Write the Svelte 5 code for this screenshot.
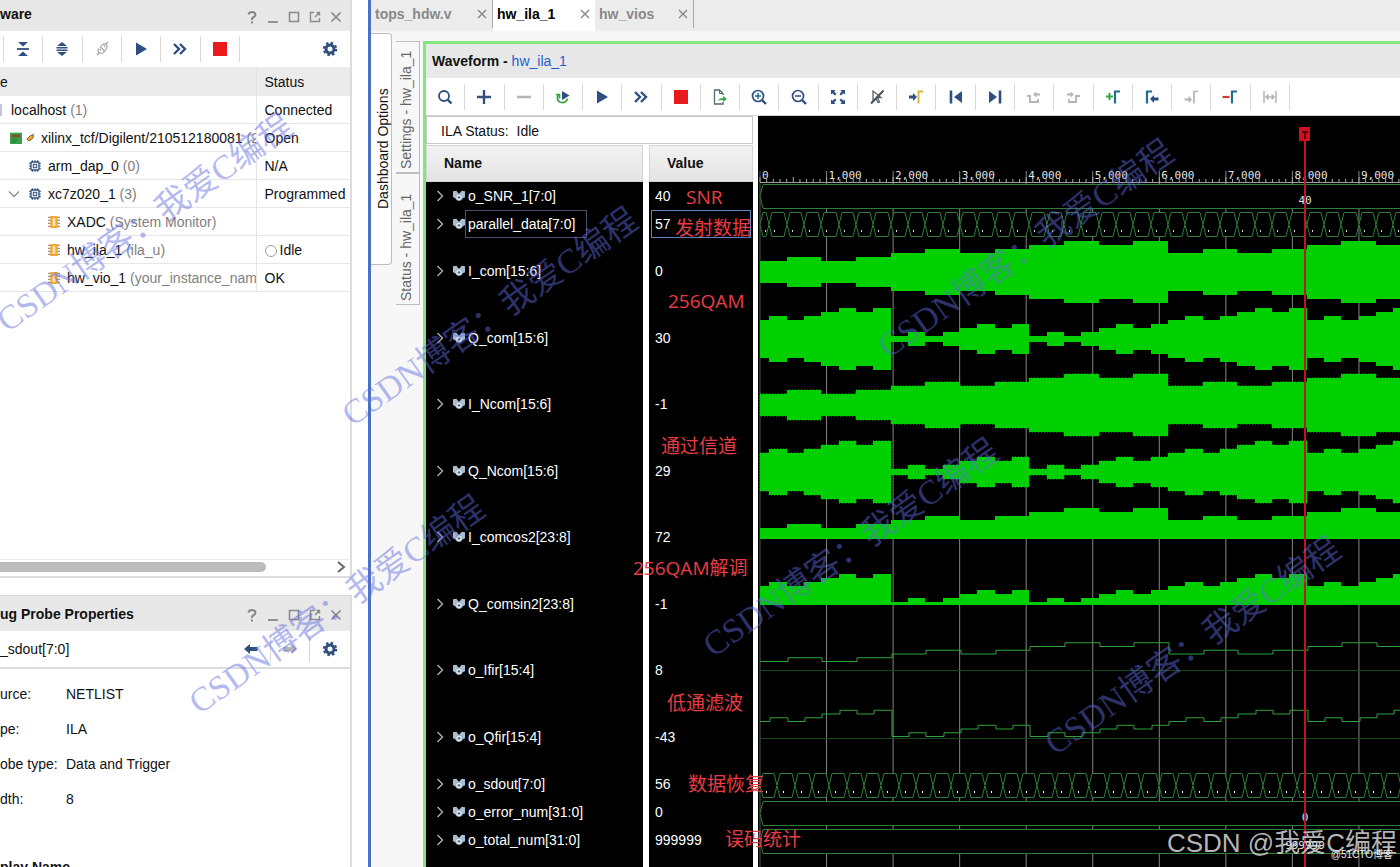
<script lang="ts">
    const NAVY = '#2f4f80';
    const GREY = '#b4b4b4';
    const TEAL = '#1f6f8b';

    // all glyphs are drawn on an 18x18 grid
    const icons: Record<string, string> = {
        help: `<path d="M5.500 6.500Q6 4 9 4T12.500 6.500Q12.500 8 10.500 9.200T9 12M9 13.500V15.500" fill="none" stroke="#858585" stroke-width="2"/>`,
        minimize: `<path d="M4 14H14" stroke="#8a8a8a" stroke-width="1.8"/>`,
        maximize: `<rect x="4.500" y="4.500" width="9" height="9" fill="none" stroke="#8a8a8a" stroke-width="1.6"/>`,
        float: `<path d="M8 4.500H4.500V13.500H13.500V10M10.500 4.500H13.500V7.500M13.500 4.500L9 9" fill="none" stroke="#8a8a8a" stroke-width="1.4"/>`,
        close: `<path d="M4.500 4.500L13.500 13.500M13.500 4.500L4.500 13.500" stroke="#858585" stroke-width="1.6"/>`,
        collapse: `<path d="M4 2H14L9 6.500ZM4 16H14L9 11.500Z" fill="${NAVY}"/><path d="M3 9H15" stroke="${NAVY}" stroke-width="1.8"/>`,
        expand: `<path d="M4 6L9 2L14 6ZM4 12L9 16L14 12Z" fill="${NAVY}"/><path d="M3.500 7.700H14.500M3.500 10.300H14.500" stroke="${NAVY}" stroke-width="1.4"/>`,
        connect: `<path d="M4 15L6 12.500M7 6.500L12 11.500M5.500 8.500Q4.500 11 6 12.500T10 13L11.500 11M8 6L10.500 4Q13 3.500 13.800 5T13 9.500L12 11M12.500 4L15 2M8 10.500L6.500 9M11 7L12.500 5.500" fill="none" stroke="#ababab" stroke-width="1.3"/>`,
        play: `<path d="M4 2.500L15 9L4 15.500Z" fill="${NAVY}"/>`,
        forward: `<path d="M3 4L8 9L3 14M9 4L14 9L9 14" fill="none" stroke="${NAVY}" stroke-width="2.4"/>`,
        stop: `<rect x="2" y="2" width="14" height="14" fill="#e81a1c"/>`,
        gear: `<circle cx="9" cy="9" r="4" fill="none" stroke="${NAVY}" stroke-width="3"/><circle cx="9" cy="9" r="6" fill="none" stroke="${NAVY}" stroke-width="2.4" stroke-dasharray="2.400 2.310"/>`,
        search: `<circle cx="8" cy="8" r="5" fill="none" stroke="${NAVY}" stroke-width="1.8"/><path d="M11.500 11.500L15.500 15.500" stroke="${NAVY}" stroke-width="2.4"/>`,
        add: `<path d="M9 2V16M2 9H16" stroke="${NAVY}" stroke-width="2.400"/>`,
        remove: `<path d="M2 9H16" stroke="${GREY}" stroke-width="2.6"/>`,
        rerun: `<path d="M8 3L15.500 7.500L8 12Z" fill="${NAVY}"/><path d="M4 7Q2 12 6 14Q12 16 13.500 10.500M2 6.500H5.500V10.500" fill="none" stroke="#3ba547" stroke-width="1.7"/>`,
        exportFile: `<path d="M12 7V5.500L8.500 2H3.500V16H12V14" fill="none" stroke="#556a72" stroke-width="1.3"/><path d="M8.500 2V5.500H12" fill="none" stroke="#556a72"/><path d="M7 13Q8 10 12 10V8L16 11L12 14V12Q9 11.500 7 13Z" fill="#38a646"/>`,
        zoomIn: `<circle cx="8" cy="8" r="5.500" fill="none" stroke="${NAVY}" stroke-width="1.700"/><path d="M12 12L16 16" stroke="${NAVY}" stroke-width="2.400"/><path d="M5 8H11M8 5V11" stroke="${TEAL}" stroke-width="1.500"/>`,
        zoomOut: `<circle cx="8" cy="8" r="5.500" fill="none" stroke="${NAVY}" stroke-width="1.700"/><path d="M12 12L16 16" stroke="${NAVY}" stroke-width="2.400"/><path d="M5 8H11" stroke="${NAVY}" stroke-width="1.500"/>`,
        fit: `<path d="M2 2H6.500L5.200 3.500L7.500 6L6 7.500L3.500 5.200L2 6.500ZM16 2V6.500L14.500 5.200L12 7.500L10.500 6L12.800 3.500L11.500 2ZM2 16V11.500L3.500 12.800L6 10.500L7.500 12L5.200 14.500L6.500 16ZM16 16H11.500L12.800 14.500L10.500 12L12 10.500L14.500 12.800L16 11.500Z" fill="${NAVY}"/>`,
        noCursor: `<path d="M5 3V13L8 10.500L10 14.500L11.500 14L9.500 9.500H13Z" fill="none" stroke="#59636c" stroke-width="1.3"/><path d="M15.500 2.500L3 15.500" stroke="#4b545c" stroke-width="2"/>`,
        gotoTrigger: `<path d="M2 7.500H6V5L10 9L6 13V10.500H2Z" fill="${NAVY}"/><path d="M11.500 15.500V3.500H16" fill="none" stroke="#d9b83c" stroke-width="2"/>`,
        first: `<path d="M4 2.500V15.500" stroke="${NAVY}" stroke-width="2.600"/><path d="M15 3V15L7 9Z" fill="${NAVY}"/>`,
        last: `<path d="M14 2.500V15.500" stroke="${NAVY}" stroke-width="2.600"/><path d="M3 3V15L11 9Z" fill="${NAVY}"/>`,
        prevEdge: `<path d="M2 8H5V14H13V11" fill="none" stroke="${GREY}" stroke-width="1.800"/><path d="M8 6.500L11.500 3.500V5.500H15V7.500H11.500V9.500Z" fill="${GREY}"/>`,
        nextEdge: `<path d="M5 11V14H12V8H16" fill="none" stroke="${GREY}" stroke-width="1.800"/><path d="M10 6.500L6.500 3.500V5.500H3V7.500H6.500V9.500Z" fill="${GREY}"/>`,
        addMarker: `<path d="M2 8.500H9M5.500 5V12" stroke="#3ba547" stroke-width="2"/><path d="M11 15.500V3.500H16" fill="none" stroke="${TEAL}" stroke-width="2.200"/>`,
        prevMarker: `<path d="M4 15.500V3.500H9" fill="none" stroke="${TEAL}" stroke-width="2.200"/><path d="M7 11L11 7V9.500H15.500V12.500H11V15Z" fill="${NAVY}"/>`,
        nextMarker: `<path d="M12 15.500V3.500H16" fill="none" stroke="${GREY}" stroke-width="1.700"/><path d="M10 11.500L6.500 8V10.500H2.500V12.500H6.500V15Z" fill="${GREY}"/>`,
        delMarker: `<path d="M1.500 9H8.500" stroke="#d63b35" stroke-width="2.200"/><path d="M11 15.500V3.500H16" fill="none" stroke="${TEAL}" stroke-width="2.200"/>`,
        span: `<path d="M3 3V15M15 3V15M5 9H13M7.500 6.500L5 9L7.500 11.500M10.500 6.500L13 9L10.500 11.500" fill="none" stroke="${GREY}" stroke-width="1.500"/>`,
        back: `<path d="M2 9L8 4V7H15.500V11H8V14Z" fill="${NAVY}"/>`,
        next: `<path d="M16 9L10 4V7H2.500V11H10V14Z" fill="${GREY}"/>`,
        chip: `<path d="M5 0V18M9 0V18M13 0V18M0 5H18M0 9H18M0 13H18" stroke="#49678c" stroke-width="1.500"/><rect x="3" y="3" width="12" height="12" rx="1" fill="#fff" stroke="#2f4f80" stroke-width="2"/><rect x="6.500" y="6.500" width="5" height="5" fill="#dfe7f0" stroke="#3d5c86" stroke-width="1.600"/>`,
        core: `<path d="M0 2H18M0 6.500H18M0 11H18M0 15.500H18" stroke="#9a958a" stroke-width="2"/><rect x="3.500" y="0" width="11" height="18" fill="#f3a72e"/><rect x="7" y="3" width="4" height="12" fill="#ffe6b8"/>`,
        board: `<rect x="0" y="1" width="18" height="17" fill="#36a04a"/><rect x="3" y="4" width="12" height="4" fill="#8c4a2c"/><path d="M2 12H12M2 15H9" stroke="#26783a" stroke-width="1.500"/>`,
        plug: `<path d="M2 12L9 5L14 4L15 9L8 15Q4 17 2 12Z" fill="#e9a52b" stroke="#7a6a4a" stroke-width="2"/><path d="M12 6L16 1" stroke="#6b5a3a" stroke-width="2"/>`,
        probe: `<path d="M0 2L5 1L9 6L13 1L18 2V11L13 13H5L0 11Z" fill="#a9bfd0"/><circle cx="9" cy="11" r="5" fill="#dce7ee" stroke="#8ba2b4"/><circle cx="9" cy="11" r="1.800" fill="#4b6173"/>`
    };

    const windowControls = [['help', 'Help'], ['minimize', 'Minimize'], ['maximize', 'Maximize'], ['float', 'Float'], ['close', 'Close']];
    const hwTools = ['collapse', 'expand', 'connect', 'play', 'forward', 'stop'];
    const waveTools = ['search', 'add', 'remove', 'rerun', 'play', 'forward', 'stop', 'exportFile', 'zoomIn', 'zoomOut', 'fit',
        'noCursor', 'gotoTrigger', 'first', 'last', 'prevEdge', 'nextEdge', 'addMarker', 'prevMarker', 'nextMarker', 'delMarker', 'span'];

    const hardware = [
        { name: 'localhost', note: '(1)', status: 'Connected', kind: 'host', depth: 0 },
        { name: 'xilinx_tcf/Digilent/210512180081', note: '(2)', status: 'Open', kind: 'board', depth: 1 },
        { name: 'arm_dap_0', note: '(0)', status: 'N/A', kind: 'chip', depth: 2 },
        { name: 'xc7z020_1', note: '(3)', status: 'Programmed', kind: 'chip', depth: 2, open: true },
        { name: 'XADC', note: '(System Monitor)', status: '', kind: 'core', depth: 3 },
        { name: 'hw_ila_1', note: '(ila_u)', status: 'Idle', kind: 'core', depth: 3, lamp: true },
        { name: 'hw_vio_1', note: '(your_instance_name)', status: 'OK', kind: 'core', depth: 3 }
    ];

    const props = [['urce:', 'NETLIST'], ['pe:', 'ILA'], ['obe type:', 'Data and Trigger'], ['dth:', '8']];

    const tabs = [
        { label: 'tops_hdw.v', w: 122 },
        { label: 'hw_ila_1', w: 102, active: true },
        { label: 'hw_vios', w: 99 }
    ];

    const signals = [
        { name: 'o_SNR_1[7:0]', value: '40' },
        { name: 'parallel_data[7:0]', value: '57', selected: true },
        { name: 'I_com[15:6]', value: '0', analog: true },
        { name: 'Q_com[15:6]', value: '30', analog: true },
        { name: 'I_Ncom[15:6]', value: '-1', analog: true },
        { name: 'Q_Ncom[15:6]', value: '29', analog: true },
        { name: 'I_comcos2[23:8]', value: '72', analog: true },
        { name: 'Q_comsin2[23:8]', value: '-1', analog: true },
        { name: 'o_Ifir[15:4]', value: '8', analog: true },
        { name: 'o_Qfir[15:4]', value: '-43', analog: true },
        { name: 'o_sdout[7:0]', value: '56' },
        { name: 'o_error_num[31:0]', value: '0' },
        { name: 'o_total_num[31:0]', value: '999999' }
    ];
    const groups = [signals.slice(0, 2), signals.slice(2, 10), signals.slice(10)];

    // waveform geometry, in plot coordinates
    const X0 = 2;
    const SYM = 17.33;
    const COUNT = 96;
    const TICK = 66.55;
    const CURSOR = 547;

    const iBase = [2, 4, 6, 4, 6];
    const qBase = [4, 0, 0, 4, 4];
    const iStep = [0, 0, 1, 1, 0, 0, 1, 1];
    const qStep = [0, 1, 0, 1, 2, 3, 2, 3];
    const idx = Array.from({ length: COUNT }, (_, k) => k);
    const iLevels = idx.map(k => iBase[(k >> 3) % 5] + iStep[k % 8]);
    const qLevels = idx.map(k => qBase[(k >> 3) % 5] + qStep[k % 8]);

    const edge = (k: number) => Math.max(X0, Math.round(k * SYM - 6));

    function steps(levels: number[], y: (n: number) => number, shift = 0) {
        return levels.map((n, k) => `${k ? 'L' : 'M'}${edge(k) + (k ? shift : 0)} ${y(n)}L${edge(k + 1) + shift} ${y(n)}`).join('');
    }

    function band(levels: number[], mid: number) {
        const right = edge(COUNT);
        let d = steps(levels, n => mid - 3 - 4 * n);
        for (let k = COUNT - 1; k >= 0; k--) {
            const y = mid + 3 + 4 * levels[k];
            d += `L${k === COUNT - 1 ? right : edge(k + 1)} ${y}L${edge(k)} ${y}`;
        }
        return d + 'Z';
    }

    const area = (levels: number[], base: number) =>
        steps(levels, n => base - 3 - 4 * n) + `L${edge(COUNT)} ${base}L${X0} ${base}Z`;

    function cell(a: number, b: number, top: number) {
        return `M${a} ${top + 12}L${a + 3} ${top}H${b - 3}L${b} ${top + 12}L${b - 3} ${top + 24}H${a + 3}Z`;
    }

    const bands = [
        { d: band(iLevels, 155), noisy: false },
        { d: band(qLevels, 222), noisy: false },
        { d: band(iLevels, 288), noisy: true },
        { d: band(qLevels, 355), noisy: true },
        { d: area(iLevels, 422), noisy: false },
        { d: area(qLevels, 488), noisy: false }
    ];
    const firs = [
        { zero: 553.5, d: steps(iLevels, n => 552 - 3.75 * n, 1) },
        { zero: 621.5, d: steps(qLevels, n => 619.5 - 3.75 * n, 1) }
    ];
    const wideBuses = [{ top: 67.5, text: '40' }, { top: 684.5, text: '0' }, { top: 712.5, text: '999999' }];
    const ticks = Array.from({ length: 24 }, (_, i) => i);
    const minor = Array.from({ length: 240 }, (_, i) => i);

    const notes = [
        { text: 'SNR', x: 686, y: 197 },
        { text: '发射数据', x: 675, y: 228 },
        { text: '256QAM', x: 668, y: 301 },
        { text: '通过信道', x: 661, y: 446 },
        { text: '256QAM解调', x: 633, y: 568 },
        { text: '低通滤波', x: 667, y: 703 },
        { text: '数据恢复', x: 688, y: 784 },
        { text: '误码统计', x: 725, y: 839 }
    ];
    const stamps = [
        { x: 1, y: 324 }, { x: 346, y: 418 }, { x: 882, y: 350 },
        { x: 193, y: 706 }, { x: 707, y: 649 }, { x: 1049, y: 747 }
    ];
</script>

{#snippet icon(name: string, size = 18)}
    <svg class="icon" width={size} height={size} viewBox="0 0 18 18" aria-hidden="true">{@html icons[name]}</svg>
{/snippet}

{#snippet controls()}
    <div class="controls">
        {#each windowControls as [name, label]}
            <button aria-label={label}>{@render icon(name, 18)}</button>
        {/each}
    </div>
{/snippet}

<div class="app">
    <aside class="left">
        <section class="panel hardware">
            <header class="panel-head"><h2>ware</h2>{@render controls()}</header>
            <div class="bar">
                <div class="tools hw-tools">
                    {#each hwTools as t}<button aria-label={t}>{@render icon(t)}</button>{/each}
                </div>
                <button class="gear" aria-label="Settings">{@render icon('gear')}</button>
            </div>
            <table>
                <thead><tr><th class="col-name">e</th><th>Status</th></tr></thead>
                <tbody>
                    {#each hardware as row}
                        <tr>
                            <td class="col-name">
                                <div class="node depth{row.depth}">
                                    {#if row.open}
                                        <button class="twisty" aria-label="Collapse"><svg width="12" height="12" viewBox="0 0 12 12"><path d="M1 3.500L6 8.500L11 3.500" fill="none" stroke="#8d8d8d" stroke-width="1.300" /></svg></button>
                                    {/if}
                                    {#if row.kind === 'host'}
                                        <i class="host"></i>
                                    {:else}
                                        {@render icon(row.kind, 12)}
                                    {/if}
                                    {#if row.kind === 'board'}{@render icon('plug', 9)}{/if}
                                    <span>{row.name} <em>{row.note}</em></span>
                                </div>
                            </td>
                            <td class:lamp={row.lamp}>{row.status}</td>
                        </tr>
                    {/each}
                </tbody>
            </table>
            <div class="hscroll">
                <div class="thumb"></div>
                <button aria-label="Scroll right"><svg width="10" height="12" viewBox="0 0 10 12"><path d="M2 1L8 6L2 11" fill="none" stroke="#666" stroke-width="2" /></svg></button>
            </div>
        </section>

        <section class="panel properties">
            <header class="panel-head"><h2>ug Probe Properties</h2>{@render controls()}</header>
            <div class="bar sub">
                <span class="probe-name">_sdout[7:0]</span>
                <button class="nav" aria-label="Back">{@render icon('back')}</button>
                <button class="nav" aria-label="Forward">{@render icon('next')}</button>
                <button class="gear" aria-label="Settings">{@render icon('gear')}</button>
            </div>
            <dl>
                {#each props as [k, v]}<dt>{k}</dt><dd>{v}</dd>{/each}
            </dl>
            <h3>play Name</h3>
        </section>
    </aside>

    <main>
        <nav class="tabs">
            {#each tabs as tab}
                <div class="tab" class:active={tab.active} style="width:{tab.w}px">
                    <button class="label">{tab.label}</button>
                    <button class="x" aria-label="Close {tab.label}"><svg width="10" height="10" viewBox="0 0 10 10"><path d="M1 1L9 9M9 1L1 9" stroke="#858585" stroke-width="1.300" /></svg></button>
                </div>
            {/each}
        </nav>

        <div class="work">
            <div class="rail"><button class="vtab dash">Dashboard Options</button></div>
            <div class="rail inner">
                <button class="vtab side">Settings - hw_ila_1</button>
                <button class="vtab side">Status - hw_ila_1</button>
            </div>

            <section class="wave">
                <header><b>Waveform -</b> <a href="#hw_ila_1">hw_ila_1</a></header>
                <div class="bar wave-bar">
                    <div class="tools wave-tools">
                        {#each waveTools as t}<button aria-label={t}>{@render icon(t)}</button>{/each}
                    </div>
                </div>
                <div class="body">
                    <div class="table">
                        <div class="ila">ILA Status:&nbsp; Idle</div>
                        <div class="columns">
                            <div class="names">
                                <div class="th">Name</div>
                                {#each groups as group}
                                    <div class="group" class:analog={group[0].analog}>
                                        {#each group as s}
                                            <div class="sig">
                                                <button class="twisty" aria-label="Expand {s.name}"><svg width="8" height="12" viewBox="0 0 8 12"><path d="M1.500 1L6.500 6L1.500 11" fill="none" stroke="#b0b0b0" stroke-width="1.400" /></svg></button>
                                                {@render icon('probe', 12)}
                                                <span class:selected={s.selected}>{s.name}</span>
                                            </div>
                                        {/each}
                                    </div>
                                {/each}
                            </div>
                            <div class="values">
                                <div class="th">Value</div>
                                {#each groups as group}
                                    <div class="group" class:analog={group[0].analog}>
                                        {#each group as s}<div class="val" class:selected={s.selected}>{s.value}</div>{/each}
                                    </div>
                                {/each}
                            </div>
                        </div>
                    </div>

                    <div class="plot">
                        <svg width="100%" height="100%">
                            {#each ticks as i}
                                <line x1={X0 + i * TICK} x2={X0 + i * TICK} y1="54" y2="100%" stroke={i ? '#858585' : '#4c5a4c'} />
                                <text class="mono" x={X0 + 2 + i * TICK} y="62">{i ? `${i},000` : '0'}</text>
                            {/each}
                            {#each minor as i}
                                <line x1={X0 + i * TICK / 10} x2={X0 + i * TICK / 10} y1={i % 5 ? 62 : 60} y2="65" stroke="#aaa" />
                            {/each}
                            <line x1={X0} x2="100%" y1="65.500" y2="65.500" stroke="#a0a0a0" />

                            {#each wideBuses as bus}
                                <path d={`M4000 ${bus.top}H5L2 ${bus.top + 12}L5 ${bus.top + 24}H4000Z`} class="bus" />
                            {/each}
                            {#each idx as k}
                                <path class="bus" d={cell(edge(k), edge(k + 1), 95.5)} />
                                <rect x={edge(k) + 5} y="113" width="1" height="2" fill="#ddd" />
                                <path class="bus" d={cell(2 + Math.round(k * SYM), 2 + Math.round((k + 1) * SYM), 656.5)} />
                                <rect x={Math.round(k * SYM) + 8} y="674" width="1" height="2" fill="#fff" />
                            {/each}

                            {#each bands as b}<path d={b.d} class="fill" class:noisy={b.noisy} />{/each}
                            {#each firs as f}
                                <line x1={X0} x2="100%" y1={f.zero} y2={f.zero} stroke="#174a1a" />
                                <path d={f.d} class="trace" />
                            {/each}
                            {#each wideBuses as bus}
                                <text class="mono value" x={CURSOR} y={bus.top + 19}>{bus.text}</text>
                            {/each}

                            <line x1={CURSOR} x2={CURSOR} y1="20" y2="100%" stroke="#c01420" stroke-width="2" />
                            <rect x={CURSOR - 6} y="10" width="11" height="14" fill="#d01020" />
                            <path d={`M${CURSOR - 3} 15H${CURSOR + 3}M${CURSOR} 15V22`} stroke="#300" stroke-width="1.500" />
                        </svg>
                    </div>
                </div>
            </section>
        </div>
    </main>

    <div class="overlay">
        {#each stamps as s}<span class="stamp" style="left:{s.x}px;top:{s.y}px">CSDN博客：我爱C编程</span>{/each}
        {#each notes as n}<span class="note" style="left:{n.x}px;top:{n.y}px">{n.text}</span>{/each}
        <span class="credit">CSDN @我爱C编程</span>
        <span class="host-credit">@51CTO博客</span>
    </div>
</div>

<style>
    :global(body) {
        margin: 0;
        background: #fff;
    }

    .app {
        position: relative;
        display: flex;
        height: 100vh;
        overflow: hidden;
        font: 14px/20px "Liberation Sans", Arial, sans-serif;
        color: #111;
    }

    button {
        display: flex;
        align-items: center;
        justify-content: center;
        margin: 0;
        padding: 0;
        border: none;
        background: none;
        font: inherit;
        color: inherit;
    }

    .icon {
        flex: none;
        display: block;
    }

    h2, h3 {
        margin: 0;
        font-size: 14px;
        font-weight: bold;
    }

    /* left side */
    .left {
        flex: 0 0 352px;
        display: flex;
        flex-direction: column;
        margin-right: 16px;
    }

    .panel {
        box-sizing: border-box;
        border-right: 2px solid #dcdcdc;
        background: #fff;
        overflow: hidden;
    }

    .hardware {
        display: flex;
        flex-direction: column;
        height: 578px;
        border-bottom: 2px solid #dcdcdc;
    }

    .panel-head {
        flex: none;
        display: flex;
        align-items: center;
        justify-content: space-between;
        height: 31px;
        background: #e8e8e8;
    }

    .hardware h2 {
        padding-bottom: 3px;
    }

    .controls {
        display: flex;
        gap: 3px;
        padding: 2px 5px 0 0;
    }

    .bar {
        flex: none;
        display: flex;
        align-items: center;
        height: 36px;
        background: #fff;
    }

    .tools {
        display: flex;
        height: 26px;
    }

    .tools button {
        flex: 1;
        border-right: 1px solid #dadada;
    }

    .hw-tools {
        width: 236px;
        margin-left: 3px;
        border-left: 1px solid #dadada;
    }

    .gear {
        margin: 0 11px 0 auto;
    }

    table {
        width: 100%;
        table-layout: fixed;
        border-collapse: collapse;
    }

    th {
        height: 29px;
        padding: 0 0 0 8px;
        background: #ebebeb;
        font-weight: normal;
        text-align: left;
    }

    th.col-name {
        width: 256px;
        padding: 0;
        box-sizing: border-box;
        border-right: 1px solid #e2e2e2;
    }

    td {
        height: 27px;
        padding: 0 0 0 8px;
        border-bottom: 1px solid #e6e6e6;
        white-space: nowrap;
    }

    td.col-name {
        padding: 0;
        border-right: 1px solid #e6e6e6;
        overflow: hidden;
    }

    .lamp::before {
        content: '';
        display: inline-block;
        width: 10px;
        height: 10px;
        margin-right: 3px;
        border: 1px solid #8fa0b0;
        border-radius: 50%;
        vertical-align: -2px;
    }

    .node {
        display: flex;
        align-items: center;
        gap: 7px;
    }

    .node em {
        font-style: normal;
        color: #808080;
    }

    .depth0 { gap: 9px; }
    .depth1 { padding-left: 10px; gap: 4px; }
    .depth1 span { padding-left: 2px; }
    .depth2 { padding-left: 29px; }
    .depth3 { padding-left: 48px; }

    .host {
        width: 2px;
        height: 12px;
        background: #c3c3e0;
    }

    .depth2 .twisty {
        margin: 0 2px 0 -21px;
    }

    .hscroll {
        display: flex;
        align-items: center;
        justify-content: space-between;
        height: 14px;
        margin-top: auto;
        padding: 0 4px 2px 0;
        border-top: 1px solid #ececec;
    }

    .thumb {
        width: 266px;
        height: 10px;
        border-radius: 0 5px 5px 0;
        background: #bcbcbc;
    }

    .properties {
        flex: 1;
        margin-top: 17px;
        border-top: 1px solid #d6d6d6;
    }

    .properties .panel-head {
        height: 35px;
    }

    .sub {
        border-bottom: 2px solid #dcdcdc;
    }

    .probe-name {
        margin-right: auto;
    }

    .nav {
        width: 39px;
        height: 26px;
        border-right: 1px solid #dadada;
    }

    .sub .gear {
        margin-left: 11px;
    }

    dl {
        display: grid;
        grid-template-columns: 66px 1fr;
        row-gap: 15px;
        margin: 15px 0 48px;
    }

    dd {
        margin: 0;
    }

    /* right side */
    main {
        flex: 1;
        min-width: 0;
        display: flex;
        flex-direction: column;
        border-left: 3px solid #4a72c4;
        background: #f7f7f7;
    }

    .tabs {
        flex: none;
        display: flex;
        height: 31px;
        background: #ececec;
    }

    .tab {
        box-sizing: border-box;
        display: flex;
        align-items: center;
        justify-content: space-between;
        height: 28px;
        padding: 0 5px 0 4px;
        font-weight: bold;
        color: #888;
        border-right: 1px solid #aaa;
    }

    .tab.active {
        height: 31px;
        padding-bottom: 3px;
        background: #fff;
        color: #000;
        border-right: none;
    }

    .work {
        flex: 1;
        display: flex;
        min-height: 0;
    }

    .rail {
        flex: none;
        width: 25px;
        padding-top: 2px;
    }

    .rail.inner {
        width: 27px;
        padding-top: 10px;
    }

    /* turned half round, so start and right mean bottom and left */
    .vtab {
        box-sizing: border-box;
        writing-mode: vertical-rl;
        transform: rotate(180deg);
        border: 1px solid #bdbdbd;
        border-right: none;
        line-height: 20px;
        color: #666;
    }

    .dash {
        width: 21px;
        height: 232px;
        padding: 0 3px 0 0;
        border-radius: 4px 0 0 4px;
        background: #fff;
        color: #111;
    }

    .side {
        justify-content: flex-start;
        width: 24px;
        height: 132px;
        padding: 3px 0 0 3px;
    }

    .wave {
        flex: 1;
        min-width: 0;
        display: flex;
        flex-direction: column;
        margin-top: 10px;
        border: solid #82e67c;
        border-width: 3px 0 0 3px;
        background: #fff;
    }

    .wave header {
        flex: none;
        height: 34px;
        padding-left: 6px;
        background: #e8e8e8;
        line-height: 34px;
    }

    .wave a {
        color: #1a5fd0;
        text-decoration: none;
    }

    .wave-bar {
        height: 37px;
        border-bottom: 1px solid #d4d4d4;
    }

    .wave-tools {
        flex: 0 1 864px;
    }

    .body {
        flex: 1;
        display: flex;
        min-height: 0;
    }

    .table {
        flex: none;
        width: 327px;
        margin-right: 5px;
        display: flex;
        flex-direction: column;
    }

    .ila {
        flex: none;
        box-sizing: border-box;
        height: 28px;
        margin-bottom: 1px;
        padding-left: 14px;
        border: 1px solid #c8c8c8;
        line-height: 28px;
    }

    .columns {
        flex: 1;
        display: flex;
        gap: 6px;
    }

    .names, .values {
        background: #000;
        color: #fff;
    }

    .names {
        flex: 0 0 217px;
    }

    .values {
        flex: 1;
    }

    .th {
        box-sizing: border-box;
        height: 37px;
        padding-left: 17px;
        border: 1px solid #d4d4d4;
        background: linear-gradient(#f2f2f2, #e4e4e4);
        color: #111;
        font-weight: bold;
        line-height: 35px;
    }

    .group {
        display: grid;
        grid-auto-rows: 28px;
    }

    .analog {
        height: 532px;
        grid-auto-rows: 1fr;
    }

    .sig {
        display: flex;
        align-items: center;
        padding-left: 10px;
    }

    .sig .twisty {
        margin-right: 9px;
    }

    .sig span {
        box-sizing: border-box;
        height: 28px;
        padding: 0 3px;
        line-height: 28px;
    }

    .sig span.selected {
        width: 122px;
        padding: 0 2px;
        border: 1px solid #4b5068;
        line-height: 26px;
    }

    .val {
        display: flex;
        align-items: center;
        padding-left: 6px;
    }

    .val.selected {
        margin: 0 2px;
        padding-left: 3px;
        border: 1px solid #5c84bd;
    }

    .plot {
        flex: 1;
        min-width: 0;
        padding-top: 1px;
        background: #000;
    }

    .plot svg {
        display: block;
    }

    .mono {
        font: 11px "DejaVu Sans Mono", monospace;
        fill: #e4e4e4;
    }

    .mono.value {
        text-anchor: middle;
    }

    .bus {
        fill: #000;
        stroke: #2f7d38;
    }

    .fill {
        fill: #00d000;
    }

    .noisy {
        stroke: #00d000;
        stroke-dasharray: 1 2;
    }

    .trace {
        fill: none;
        stroke: #2fa338;
    }

    /* annotations laid over the window */
    .overlay {
        position: absolute;
        inset: 0;
        overflow: hidden;
        pointer-events: none;
    }

    .overlay span {
        position: absolute;
        white-space: nowrap;
    }

    .stamp {
        font: 34px/36px "Liberation Serif", "Noto Sans CJK SC", serif;
        color: rgba(96, 108, 225, 0.48);
        transform: translateY(-50%) rotate(-35deg);
        transform-origin: left center;
    }

    .note {
        font: 19px/24px "Open Sans", "Noto Sans CJK SC", sans-serif;
        color: #ea3c46;
        transform: translateY(-50%);
    }

    .overlay .credit {
        right: 3px;
        bottom: 8px;
        font: 26px/32px "Liberation Sans", "Noto Sans CJK SC", sans-serif;
        color: rgba(215, 215, 215, 0.85);
    }

    .overlay .host-credit {
        right: 7px;
        bottom: 4px;
        font: 10px/16px "Liberation Sans", "Noto Sans CJK SC", sans-serif;
        color: #eee;
    }
</style>
